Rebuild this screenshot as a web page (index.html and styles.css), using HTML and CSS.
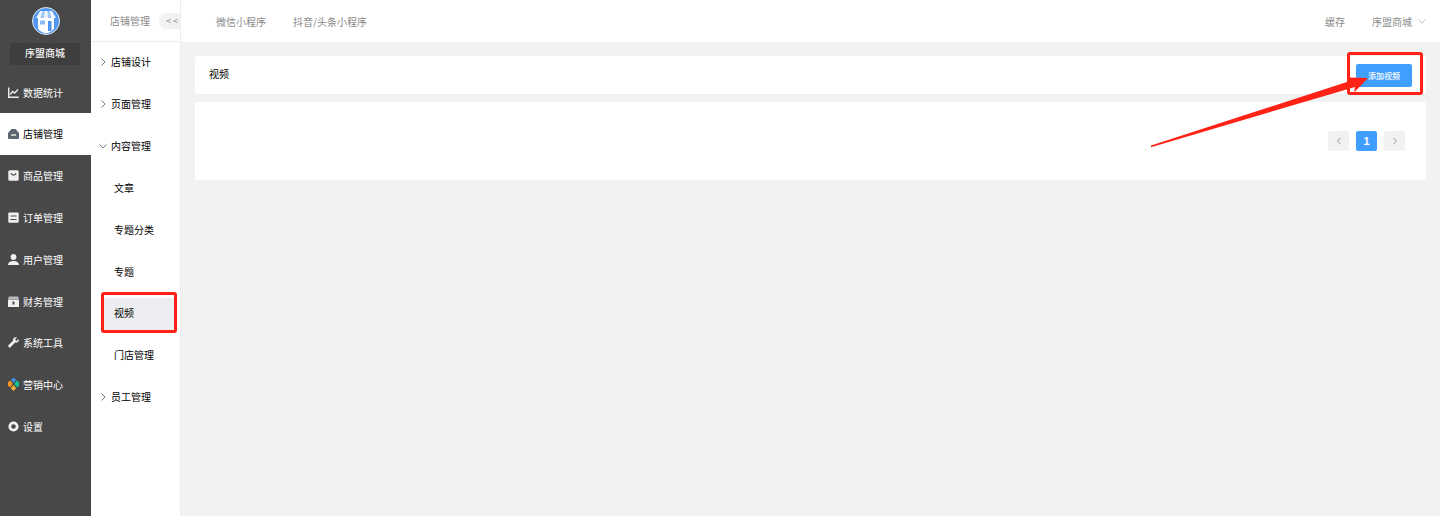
FILE: index.html
```html
<!DOCTYPE html>
<html lang="zh-CN">
<head>
<meta charset="utf-8">
<title>视频</title>
<link rel="stylesheet" href="styles.css">
</head>
<body>
<div class="app">
  <aside class="rail">
    <div class="brand">
      <svg class="logo" viewBox="0 0 28 28" width="28" height="28">
        <circle cx="14" cy="14" r="13.500" fill="#4f97f2" stroke="#e3e8ee" stroke-width="1"/>
        <path d="M8 4h12l4 7H4z" fill="#eef5fe"/>
        <path d="M10.500 4h2L12 11H8.500zM15.500 4h2l2 7H16z" fill="#9cc4f8"/>
        <path d="M6 11h16v11c-2 2-4.500 4-8 4.500-3.500-.5-6-2.500-8-4.500z" fill="#fff"/>
        <path d="M8 13.500h5v4H8z" fill="#8dbbf7"/>
        <path d="M16 14h3.500v10H16z" fill="#4f97f2"/>
      </svg>
      <div class="brand-name">序盟商城</div>
    </div>
    <nav class="rail-nav">
      <a class="rail-item">
        <svg viewBox="0 0 11 11" width="11" height="11"><path d="M.7 .5v9.800h10" fill="none" stroke="#eee" stroke-width="1.400"/><path d="M2.200 7.500l2.500-3 2 1.500L10 2.500" fill="none" stroke="#eee" stroke-width="1.400"/></svg>
        <span>数据统计</span>
      </a>
      <a class="rail-item is-active">
        <svg viewBox="0 0 11 11" width="11" height="11"><path d="M3.500 1h4L11 5v5a1 1 0 0 1-1 1H1a1 1 0 0 1-1-1V5z" fill="#5c6670"/><path d="M3 7h5" stroke="#fff" stroke-width="1.300"/></svg>
        <span>店铺管理</span>
      </a>
      <a class="rail-item">
        <svg viewBox="0 0 11 11" width="11" height="11"><rect x=".3" y=".3" width="10.400" height="10.400" rx="1.500" fill="#f0f0f0"/><path d="M3 3c.5 2.800 4.500 2.800 5 0" fill="none" stroke="#484848" stroke-width="1.200"/></svg>
        <span>商品管理</span>
      </a>
      <a class="rail-item">
        <svg viewBox="0 0 11 11" width="11" height="11"><rect x=".3" y=".5" width="10.400" height="10.200" rx="1" fill="#f0f0f0"/><path d="M2.500 4h6M2.500 7.500h6" stroke="#484848" stroke-width="1.200"/></svg>
        <span>订单管理</span>
      </a>
      <a class="rail-item">
        <svg viewBox="0 0 11 11" width="11" height="11"><circle cx="5.500" cy="3" r="2.900" fill="#f0f0f0"/><path d="M0 11c0-5.500 11-5.500 11 0z" fill="#f0f0f0"/></svg>
        <span>用户管理</span>
      </a>
      <a class="rail-item">
        <svg viewBox="0 0 11 11" width="11" height="11"><path d="M1 .5h9l1 2.500H0z" fill="#bbb"/><path d="M0 3.500h11V11H0z" fill="#f0f0f0"/><path d="M4.500 5.500h2v3h-2z" fill="#484848"/></svg>
        <span>财务管理</span>
      </a>
      <a class="rail-item">
        <svg viewBox="0 0 11 11" width="11" height="11"><path d="M10.700 2L8.600 4 7 2.500 9 .4C7 -.5 4.500 1 5 3.700L.4 8.300c-.8 1 1 2.900 2.100 2l4.600-4.700c2.700.5 4.400-1.500 3.600-3.600z" fill="#f0f0f0"/></svg>
        <span>系统工具</span>
      </a>
      <a class="rail-item">
        <svg viewBox="0 0 11 13" width="11" height="13"><path d="M2.700 1.500 5.500 0l2.800 1.500L5.500 5z" fill="#3f8fe8"/><path d="M2.300 2.600 4.800 6 2.300 9.300 0 8V4z" fill="#f5941d"/><path d="M8.700 2.600 6.200 6l2.500 3.300L11 8V4z" fill="#14c29a"/><path d="M2.800 10.200 5.500 7l2.700 3.200L5.500 13z" fill="#f5b23d"/></svg>
        <span>营销中心</span>
      </a>
      <a class="rail-item">
        <svg viewBox="0 0 11 11" width="11" height="11"><circle cx="5.500" cy="5.500" r="3.700" fill="none" stroke="#f0f0f0" stroke-width="2.800"/></svg>
        <span>设置</span>
      </a>
    </nav>
  </aside>

  <aside class="submenu">
    <div class="submenu-head">
      <span class="submenu-title">店铺管理</span>
      <span class="collapse">&lt;&lt;</span>
    </div>
    <ul class="tree">
      <li class="tree-group"><svg class="chev" viewBox="0 0 8 8"><path d="M2.500 .5L6 4 2.500 7.500"/></svg>店铺设计</li>
      <li class="tree-group"><svg class="chev" viewBox="0 0 8 8"><path d="M2.500 .5L6 4 2.500 7.500"/></svg>页面管理</li>
      <li class="tree-group"><svg class="chev" viewBox="0 0 8 8"><path d="M.5 2.500L4 6l3.500-3.500"/></svg>内容管理</li>
      <li class="tree-leaf">文章</li>
      <li class="tree-leaf">专题分类</li>
      <li class="tree-leaf">专题</li>
      <li class="tree-leaf is-current"><span class="current-bg">视频</span></li>
      <li class="tree-leaf">门店管理</li>
      <li class="tree-group"><svg class="chev" viewBox="0 0 8 8"><path d="M2.500 .5L6 4 2.500 7.500"/></svg>员工管理</li>
    </ul>
  </aside>

  <div class="main">
    <header class="topbar">
      <div class="tabs">
        <span>微信小程序</span>
        <span>抖音/头条小程序</span>
      </div>
      <div class="top-right">
        <span class="cache">缓存</span>
        <span class="shop">序盟商城</span>
        <svg class="caret" viewBox="0 0 8 8"><path d="M.5 2.500L4 6l3.500-3.500"/></svg>
      </div>
    </header>
    <section class="content">
      <div class="card title-card">
        <span class="page-title">视频</span>
        <button class="btn-add">添加视频</button>
      </div>
      <div class="card list-card">
        <div class="pager">
          <span class="page-btn"><svg viewBox="0 0 8 8"><path d="M5.500 1L2.500 4l3 3"/></svg></span>
          <span class="page-btn is-on">1</span>
          <span class="page-btn"><svg viewBox="0 0 8 8"><path d="M2.500 1l3 3-3 3"/></svg></span>
        </div>
      </div>
    </section>
  </div>
</div>

<div class="mark mark-menu"></div>
<div class="mark mark-btn"></div>
<svg class="arrow" viewBox="0 0 1440 516" width="1440" height="516">
  <path d="M1151 145.500L1350 81 1350 77.500 1368 78 1354 92.500 1355 87 1151 147.200z" fill="#ff2216"/>
</svg>
</body>
</html>
```
FILE: styles.css
```css
* { box-sizing: border-box; }
html, body { margin: 0; height: 100%; }
body {
  font-family: "Noto Sans CJK SC", "Liberation Sans", sans-serif;
  font-size: 10px;
  background: #f2f2f2;
  overflow: hidden;
}
.app { display: flex; height: 516px; }

.rail { width: 91px; flex: none; background: #484848; display: flex; flex-direction: column; }
.brand { display: flex; flex-direction: column; align-items: center; padding-top: 7px; height: 71.200px; }
.logo { display: block; }
.brand-name {
  width: 70px; height: 22px; margin-top: 8px; margin-right: 1px;
  background: #3e3e3e; border-radius: 2px;
  color: #f6f6f6; font-size: 10px; line-height: 20px; text-align: center; font-weight: 500;
}
.rail-nav { display: flex; flex-direction: column; }
.rail-item {
  height: 41.800px; display: flex; align-items: center; gap: 4px;
  padding-left: 8px; color: #fff; font-size: 10px;
}
.rail-item svg { flex: none; }
.rail-item.is-active { background: #fff; color: #000; }

.submenu { width: 90px; flex: none; background: #fff; border-right: 1px solid #ececec; }
.submenu-head {
  height: 42px; display: flex; align-items: center;
  padding-left: 19px; border-bottom: 1px solid #ececec; overflow: hidden;
}
.submenu-title { color: #8a8a8a; white-space: nowrap; width: 40px; flex: none; }
.collapse {
  margin-left: 9px; flex: none; width: 31px; height: 16px;
  background: #f2f2f2; border-radius: 8px 0 0 8px;
  color: #8c8c8c; font-size: 9px; line-height: 15px; padding-left: 7px; letter-spacing: 2px;
}
.tree { list-style: none; margin: 0; padding: 0; }
.tree li { height: 41.850px; padding-bottom: 2px; display: flex; align-items: center; color: #000; white-space: nowrap; }
.tree-group { padding-left: 8px; gap: 4px; }
.chev { width: 8px; height: 8px; flex: none; fill: none; stroke: #5a6a7a; stroke-width: .9; }
.tree-leaf { padding-left: 23px; }
.tree li.is-current { padding: 0 6px 0 13px; }
.current-bg { display: flex; align-items: center; width: 71px; height: 32px; padding: 0 0 2px 10px; background: #eeeef2; border-radius: 2px; }

.main { flex: 1; min-width: 0; display: flex; flex-direction: column; }
.topbar {
  height: 42px; flex: none; background: #fff; display: flex; align-items: center;
  justify-content: space-between; padding: 0 14px 0 35px;
  color: #8a8a8a;
}
.tabs { display: flex; gap: 27px; }
.top-right { display: flex; align-items: center; }
.cache { margin-right: 27px; }
.shop { margin-right: 6px; }
.caret { width: 8px; height: 8px; fill: none; stroke: #b0b0b0; stroke-width: .8; }

.content { padding: 14px 14px 0; }
.card { background: #fff; border-radius: 2px; }
.title-card {
  height: 39px; display: flex; align-items: center; justify-content: space-between;
  padding: 0 14px; border-bottom: 1px solid #ececf2; color: #000;
}
.page-title { margin-bottom: 4px; }
.btn-add {
  width: 56px; height: 23px; margin: 0; padding: 0; border: 0; border-radius: 2px;
  background: #409eff; color: #fff; font: inherit; font-size: 8px; font-weight: 500;
}
.list-card { margin-top: 7px; height: 78px; padding: 29px 21px 0 0; display: flex; justify-content: flex-end; align-items: flex-start; }
.pager { display: flex; gap: 7px; }
.page-btn {
  width: 21px; height: 20px; display: flex; align-items: center; justify-content: center;
  background: #f2f2f2; border-radius: 2px; font-family: "Liberation Sans", sans-serif; font-weight: 700; font-size: 11px;
}
.page-btn svg { width: 8px; height: 8px; fill: none; stroke: #bdbdc4; stroke-width: 1.300; }
.page-btn.is-on { background: #409eff; color: #fff; }

.mark { position: absolute; border: 3px solid #ff2216; border-radius: 3px; }
.mark-menu { left: 101px; top: 292px; width: 76px; height: 41px; }
.mark-btn { left: 1347px; top: 52px; width: 76px; height: 43px; }
.arrow { position: absolute; left: 0; top: 0; pointer-events: none; }
```
